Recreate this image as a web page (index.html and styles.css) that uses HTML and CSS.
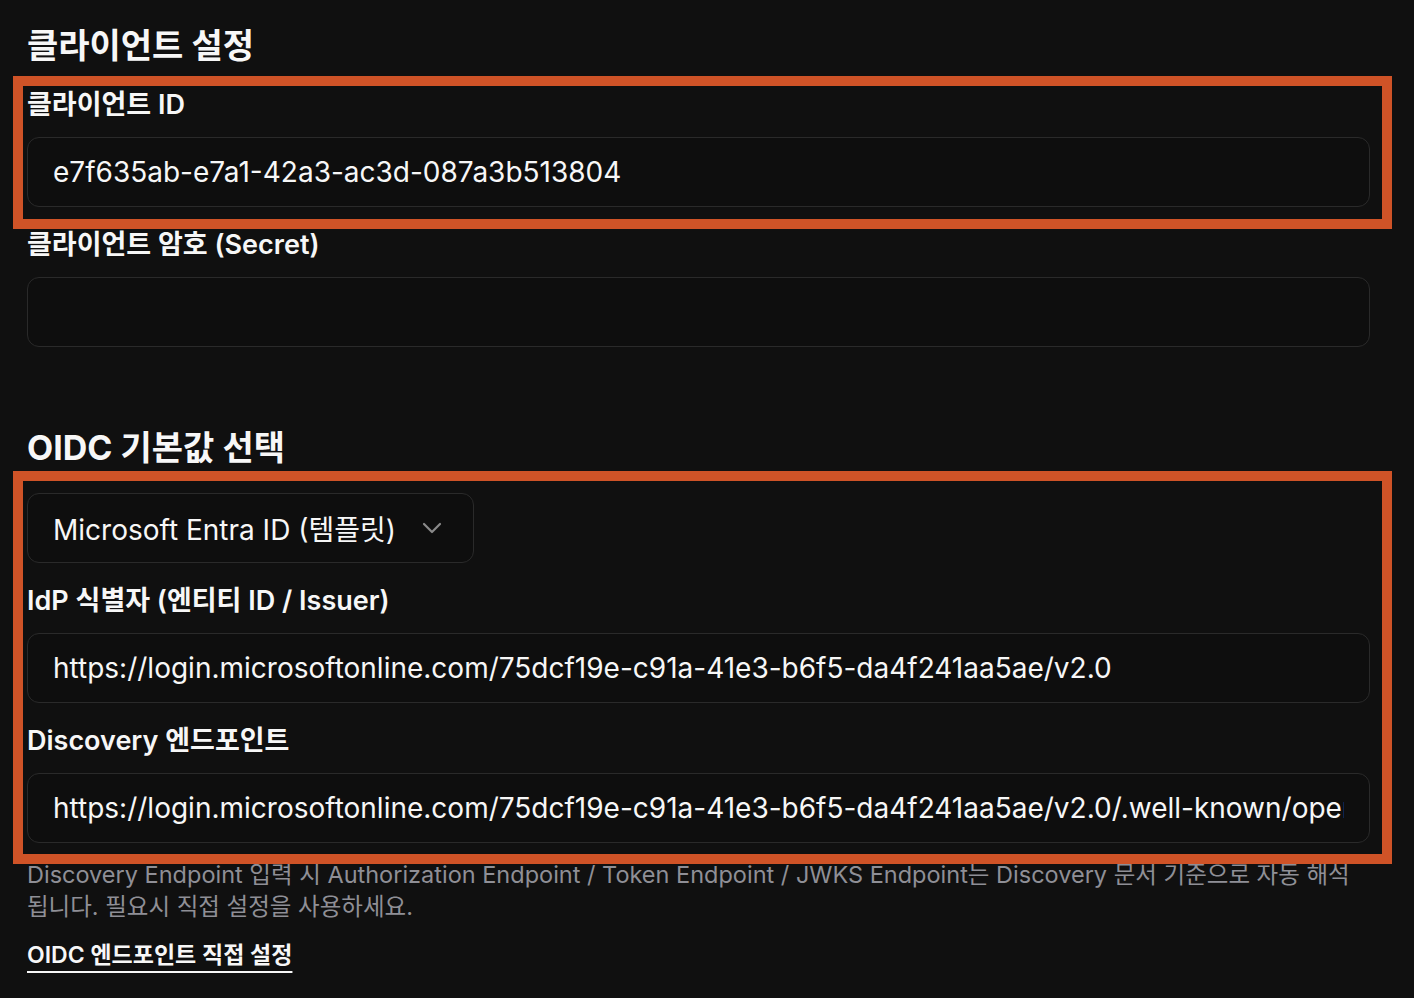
FILE: index.html
```html
<!DOCTYPE html>
<html lang="ko">
<head>
<meta charset="utf-8">
<title>클라이언트 설정</title>
<link rel="stylesheet" href="styles.css">
</head>
<body>
<div class="page">
  <section class="section">
    <h2 class="section-title">클라이언트 설정</h2>
    <div class="fields">
      <div class="field">
        <label class="field-label">클라이언트 ID</label>
        <input class="text-input" type="text" readonly value="e7f635ab-e7a1-42a3-ac3d-087a3b513804">
      </div>
      <div class="field">
        <label class="field-label">클라이언트 암호 (Secret)</label>
        <input class="text-input" type="password" readonly value="">
      </div>
    </div>
  </section>

  <section class="section section-oidc">
    <h2 class="section-title">OIDC 기본값 선택</h2>
    <div class="select">
      <span class="select-value">Microsoft Entra ID (템플릿)</span>
      <svg class="chevron" width="20" height="12" viewBox="0 0 20 12" aria-hidden="true">
        <polyline points="2,2 10,10 18,2" fill="none" stroke="#8a8a8a" stroke-width="2.2" stroke-linecap="round" stroke-linejoin="round"/>
      </svg>
    </div>
    <div class="fields fields-oidc">
      <div class="field">
        <label class="field-label">IdP 식별자 (엔티티 ID / Issuer)</label>
        <input class="text-input" type="text" readonly value="https://login.microsoftonline.com/75dcf19e-c91a-41e3-b6f5-da4f241aa5ae/v2.0">
      </div>
      <div class="field">
        <label class="field-label">Discovery 엔드포인트</label>
        <input class="text-input" type="text" readonly value="https://login.microsoftonline.com/75dcf19e-c91a-41e3-b6f5-da4f241aa5ae/v2.0/.well-known/openid-configuration">
      </div>
    </div>
    <p class="helper">Discovery Endpoint 입력 시 Authorization Endpoint / Token Endpoint / JWKS Endpoint는 Discovery 문서 기준으로 자동 해석됩니다. 필요시 직접 설정을 사용하세요.</p>
    <a class="manual-link" href="#">OIDC 엔드포인트 직접 설정</a>
  </section>

  <div class="highlight highlight-client"></div>
  <div class="highlight highlight-oidc"></div>
</div>
</body>
</html>
```

FILE: styles.css
```css
* {
  box-sizing: border-box;
}

html, body {
  margin: 0;
  padding: 0;
  background: #101010;
}

body {
  font-family: Inter, "Noto Sans CJK KR", "Noto Sans", sans-serif;
  color: #f7f7f7;
  width: 1414px;
  min-height: 998px;
}

.page {
  position: relative;
  padding: 24px 44px 0 27px;
}

.section-title {
  margin: 0;
  font-size: 34px;
  line-height: 44px;
  font-weight: 700;
}

.fields {
  display: flex;
  flex-direction: column;
  gap: 20px;
  margin-top: 19px;
}

.field {
  display: flex;
  flex-direction: column;
  gap: 14px;
}

.field-label {
  font-size: 27px;
  line-height: 36px;
  font-weight: 600;
}

.text-input {
  width: 100%;
  height: 70px;
  padding: 0 25px;
  border: 1px solid #2a2a2a;
  border-radius: 12px;
  background: #0e0e0e;
  color: #f7f7f7;
  font-family: inherit;
  font-size: 28px;
  outline: none;
}

.section-oidc {
  margin-top: 79px;
}

.select {
  display: flex;
  align-items: center;
  justify-content: space-between;
  width: 447px;
  height: 70px;
  margin-top: 23px;
  padding: 0 31px 0 25px;
  border: 1px solid #2a2a2a;
  border-radius: 12px;
  background: #0e0e0e;
  font-size: 28px;
}

.chevron {
  display: block;
}

.fields-oidc {
  margin-top: 20px;
}

.helper {
  margin: 16px 0 0;
  font-size: 23.5px;
  line-height: 32px;
  color: #8f8f96;
}

.manual-link {
  display: inline-block;
  margin-top: 14px;
  font-size: 23px;
  line-height: 36px;
  font-weight: 600;
  color: #f7f7f7;
  text-decoration: underline;
  text-decoration-thickness: 2px;
  text-underline-offset: 8px;
}

.highlight {
  position: absolute;
  left: 13px;
  width: 1379px;
  border: 10px solid #cf5327;
  pointer-events: none;
}

.highlight-client {
  top: 76px;
  height: 153px;
}

.highlight-oidc {
  top: 471px;
  height: 393px;
}
```
